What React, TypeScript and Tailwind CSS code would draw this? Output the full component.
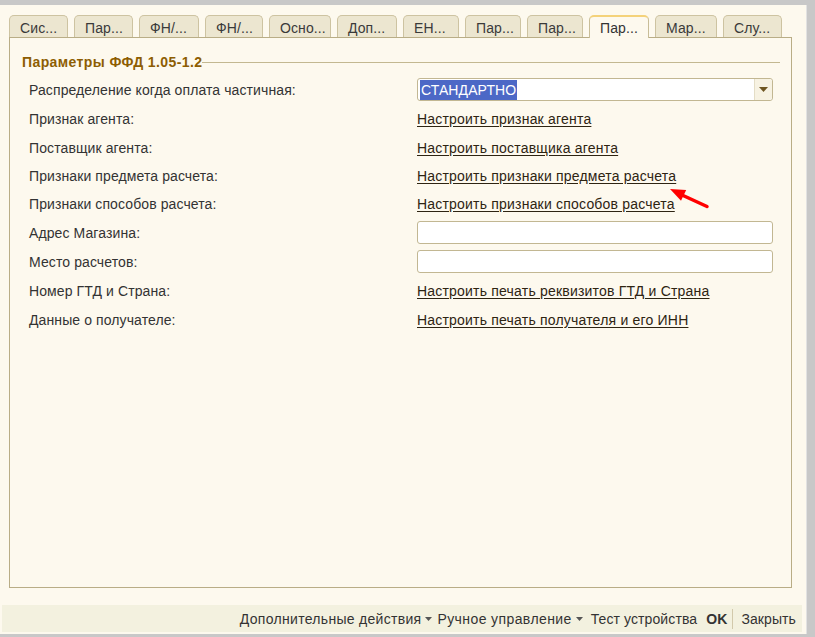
import React from "react";

const tabs = [
  { label: "Сис...", w: "w-[59px]" },
  { label: "Пар...", w: "w-[59px]" },
  { label: "ФН/...", w: "w-[60px]" },
  { label: "ФН/...", w: "w-[58px]" },
  { label: "Осно...", w: "w-[62px]" },
  { label: "Доп...", w: "w-[60px]" },
  { label: "ЕН...", w: "w-[56px]" },
  { label: "Пар...", w: "w-[56px]" },
  { label: "Пар...", w: "w-[56px]" },
  { label: "Пар...", w: "w-[60px]", active: true },
  { label: "Мар...", w: "w-[62px]" },
  { label: "Слу...", w: "w-[59px]" },
];

function Link({ children }: { children: React.ReactNode }) {
  return (
    <span className="text-[#2e2412] underline underline-offset-2 decoration-[#2e2412] whitespace-nowrap tracking-[0.2px]">
      {children}
    </span>
  );
}

function Row({
  label,
  h = "h-[23px]",
  children,
}: {
  label: string;
  h?: string;
  children: React.ReactNode;
}) {
  return (
    <div className={`flex items-center ${h}`}>
      <div className="w-[407px] pl-[19px] text-[#333333] whitespace-nowrap">{label}</div>
      <div className="w-[356px] flex items-center">{children}</div>
    </div>
  );
}

function TextBox() {
  return (
    <div className="w-[356px] h-[23px] bg-white border border-[#c2b792] rounded-[3px]" />
  );
}

function Caret() {
  return (
    <svg width="7" height="4" viewBox="0 0 7 4" className="ml-[4px] mt-[1px]">
      <path d="M0 0 L7 0 L3.5 4 Z" fill="#555555" />
    </svg>
  );
}

export default function App() {
  return (
    <div
      className="w-[815px] h-[637px] bg-[#c8c8c8] overflow-hidden text-[14px] leading-[16px] tracking-[0.1px]"
      style={{ fontFamily: '"Liberation Sans", Arial, sans-serif' }}
    >
      <div className="h-[5px]" />
      <div className="w-[807px] h-[629px] bg-[#fdf9ee] flex flex-col border-r border-[#e2e2e2]">
        {/* Tabs */}
        <div className="mt-[10px] pl-[9px] flex gap-[6px] h-[22px] items-stretch relative z-10">
          {tabs.map((t, i) =>
            t.active ? (
              <div
                key={i}
                className={`${t.w} h-[23px] bg-[#fdf9ee] border border-b-0 border-[#c8bd98] border-t-2 border-t-[#f4d27a] rounded-t-[5px] pl-[10px] pt-[3px] text-[#333333] whitespace-nowrap`}
              >
                {t.label}
              </div>
            ) : (
              <div
                key={i}
                className={`${t.w} h-[22px] bg-[#ece6d0] border border-b-0 border-[#cdc3a1] rounded-t-[5px] pl-[10px] pt-[4px] text-[#3a3a3a] whitespace-nowrap`}
              >
                {t.label}
              </div>
            )
          )}
        </div>

        {/* Panel */}
        <div className="ml-[9px] w-[783px] h-[551px] border border-[#b9ad86] relative">
          <div className="pt-[16px] pl-[12px] pr-[11px] flex items-center h-[32px]">
            <span className="font-bold text-[#8d5d02] whitespace-nowrap tracking-[0.4px]">
              Параметры ФФД 1.05-1.2
            </span>
            <div className="flex-1 h-px bg-[#c3b891] mt-[1px]" />
          </div>

          <div className="mt-[8px] flex flex-col gap-[6px]">
            <Row label="Распределение когда оплата частичная:">
              <div className="w-[356px] h-[23px] bg-white border border-[#c2b792] rounded-[3px] flex items-center">
                <div className="flex-1 pl-[2px]">
                  <span className="bg-[#4c68c6] text-white px-[1px] py-[2px]">
                    СТАНДАРТНО
                  </span>
                </div>
                <div className="w-[18px] h-full border-l border-[#e4ddc6] bg-[#f7f2e2] rounded-r-[3px] flex items-center justify-center">
                  <svg width="9" height="5" viewBox="0 0 9 5">
                    <path d="M0 0 L9 0 L4.5 5 Z" fill="#6e5520" />
                  </svg>
                </div>
              </div>
            </Row>
            <Row label="Признак агента:">
              <Link>Настроить признак агента</Link>
            </Row>
            <Row label="Поставщик агента:">
              <Link>Настроить поставщика агента</Link>
            </Row>
            <Row label="Признаки предмета расчета:" h="h-[22px]">
              <Link>Настроить признаки предмета расчета</Link>
            </Row>
            <Row label="Признаки способов расчета:" h="h-[22px]">
              <Link>Настроить признаки способов расчета</Link>
            </Row>
            <Row label="Адрес Магазина:">
              <TextBox />
            </Row>
            <Row label="Место расчетов:">
              <TextBox />
            </Row>
            <Row label="Номер ГТД и Страна:">
              <Link>Настроить печать реквизитов ГТД и Страна</Link>
            </Row>
            <Row label="Данные о получателе:">
              <Link>Настроить печать получателя и его ИНН</Link>
            </Row>
          </div>

          {/* red annotation arrow */}
          <svg
            className="absolute left-[650px] top-[143px]"
            width="60"
            height="35"
            viewBox="0 0 60 35"
          >
            <line x1="22" y1="14" x2="47" y2="25.5" stroke="#ff0000" strokeWidth="3.5" strokeLinecap="round" />
            <path d="M10 8 L21 19.8 L26.2 9 Z" fill="#ff0000" />
          </svg>
        </div>

        {/* Bottom bar */}
        <div className="mt-[17px] ml-[2px] w-[800px] h-[27px] bg-[#f3f1df] flex items-center justify-end pr-[6px] text-[#333333]">
          <div className="flex items-center tracking-[0.3px]">
            Дополнительные действия
            <Caret />
          </div>
          <div className="flex items-center ml-[5px] tracking-[0.4px]">
            Ручное управление
            <Caret />
          </div>
          <div className="ml-[8px]">Тест устройства</div>
          <div className="ml-[9px] font-bold">OK</div>
          <div className="ml-[5px] w-px h-[20px] bg-[#d2c9ab]" />
          <div className="ml-[8px]">Закрыть</div>
        </div>
      </div>
    </div>
  );
}
